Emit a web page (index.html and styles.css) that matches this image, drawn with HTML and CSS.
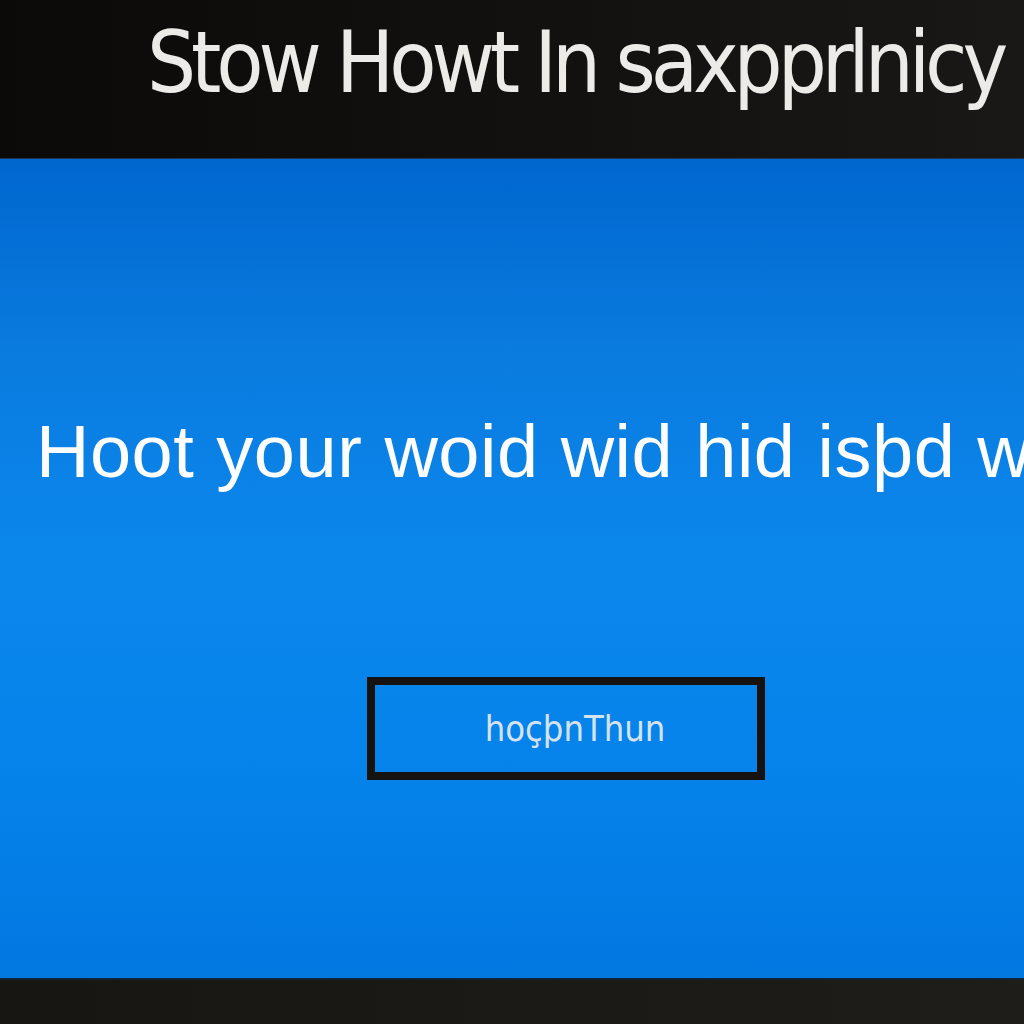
FILE: index.html
```html
<!DOCTYPE html>
<html lang="en">
<head>
  <meta charset="UTF-8" />
  <title>Stow Howt</title>
  <link rel="stylesheet" href="styles.css">
</head>
<body>
  <!-- top black bar with title -->
  <div class="topbar">
    <h1>Stow Howt In saxpprlnicy</h1>
  </div>

  <!-- blue screen -->
  <div class="screen">
    <div class="message">Hoot your woid wid hid isþd w</div>
    <button class="action">hoçþnThun</button>
  </div>

  <div class="bottombar"></div>
</body>
</html>
```

FILE: styles.css
```css
* { margin: 0; padding: 0; box-sizing: border-box; }
html, body {
  height: 100%;
  background: #100e0c;
  overflow: hidden;
}
body {
  display: flex;
  flex-direction: column;
  font-family: 'Liberation Sans', Arial, sans-serif;
}

.topbar {
  height: 159px;
  background: linear-gradient(90deg, #0c0a08 0%, #141210 60%, #1a1816 100%);
  padding: 19px 0 0 147px;
  border-bottom: 1px solid #1d3550;
  overflow: hidden;
}
.topbar h1 {
  font-family: 'DejaVu Sans Condensed', sans-serif;
  font-weight: normal;
  font-size: 86px;
  line-height: 1;
  letter-spacing: -5.1px;
  color: #ecebe8;
  white-space: nowrap;
}

.screen {
  flex: 1;
  display: flex;
  flex-direction: column;
  align-items: flex-start;
  padding-top: 256px;
  background: linear-gradient(180deg, #0067cf 0%, #0a7ce0 25%, #0b87ec 50%, #0583ea 75%, #0278e1 100%);
  overflow: hidden;
}
.message {
  font-size: 74px;
  line-height: 1;
  letter-spacing: 0.5px;
  word-spacing: 1px;
  color: #fdfdfd;
  white-space: nowrap;
  padding-left: 36px;
}
.action {
  margin: 188px 0 0 367px;
  width: 398px;
  height: 103px;
  border: 8px solid #15120f;
  background: transparent;
  color: #d6e2ee;
  font-family: 'DejaVu Sans Condensed', sans-serif;
  font-size: 36px;
  font-weight: 300;
  padding-left: 18px;
}

.bottombar {
  height: 46px;
  background: linear-gradient(90deg, #171613, #1e1d1a);
  border-top: 2px solid #102238;
}
```
